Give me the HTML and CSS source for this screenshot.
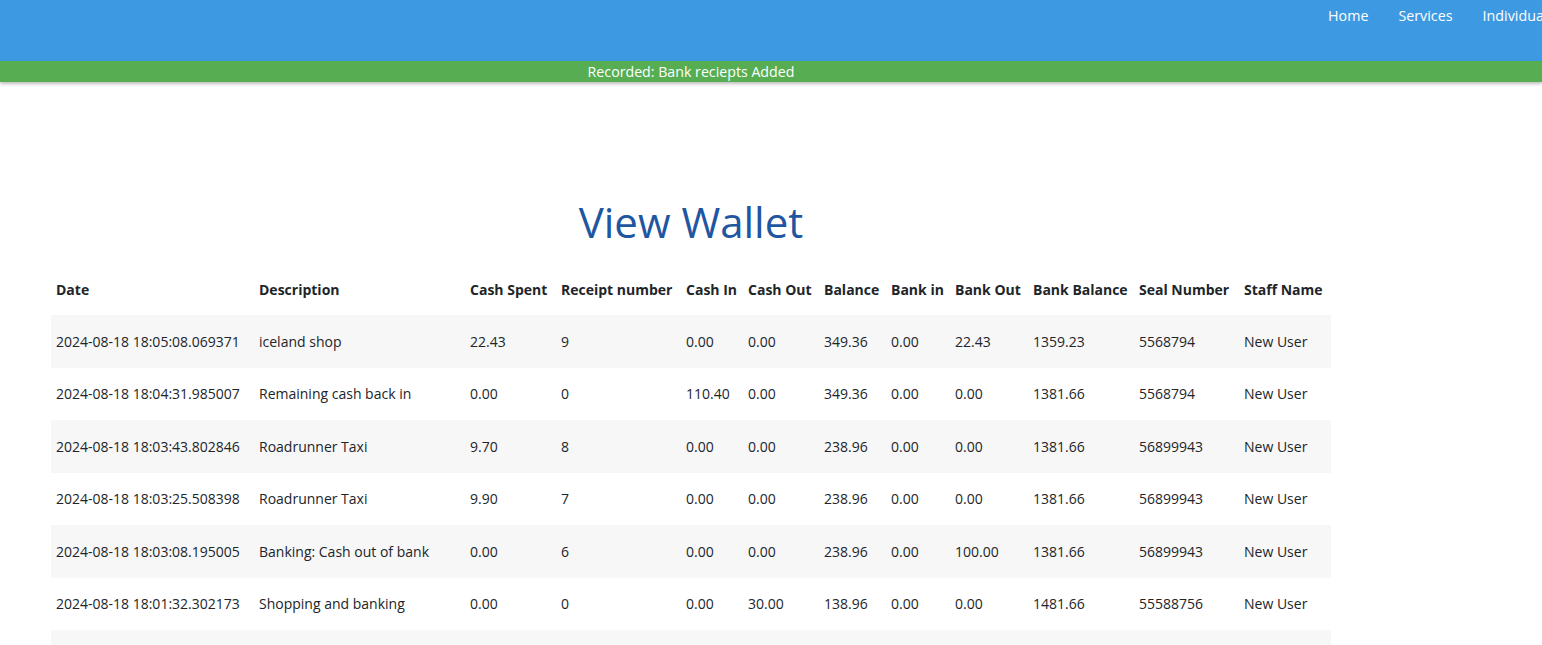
FILE: index.html
```html
<!DOCTYPE html>
<html>
<head>
<meta charset="utf-8">
<title>View Wallet</title>
<link rel="stylesheet" href="styles.css">
</head>
<body>
<header class="topbar">
  <nav class="nav">
    <a class="nav-link" href="#">Home</a>
    <a class="nav-link" href="#">Services</a>
    <a class="nav-link" href="#">Individuals</a>
    <a class="nav-link" href="#">Contact</a>
  </nav>
</header>
<div class="flash">
  <div class="flash-inner">Recorded: Bank reciepts Added</div>
</div>
<main class="content">
  <h1 class="title">View Wallet</h1>
  <table class="wallet">
    <colgroup>
      <col style="width:203px"><col style="width:211px"><col style="width:91px"><col style="width:125px">
      <col style="width:62px"><col style="width:76px"><col style="width:67px"><col style="width:64px">
      <col style="width:78px"><col style="width:106px"><col style="width:105px"><col style="width:92px">
    </colgroup>
    <thead>
      <tr>
        <th>Date</th><th>Description</th><th>Cash Spent</th><th>Receipt number</th><th>Cash In</th><th>Cash Out</th><th>Balance</th><th>Bank in</th><th>Bank Out</th><th>Bank Balance</th><th>Seal Number</th><th>Staff Name</th>
      </tr>
    </thead>
    <tbody>
      <tr><td>2024-08-18 18:05:08.069371</td><td>iceland shop</td><td>22.43</td><td>9</td><td>0.00</td><td>0.00</td><td>349.36</td><td>0.00</td><td>22.43</td><td>1359.23</td><td>5568794</td><td>New User</td></tr>
      <tr><td>2024-08-18 18:04:31.985007</td><td>Remaining cash back in</td><td>0.00</td><td>0</td><td>110.40</td><td>0.00</td><td>349.36</td><td>0.00</td><td>0.00</td><td>1381.66</td><td>5568794</td><td>New User</td></tr>
      <tr><td>2024-08-18 18:03:43.802846</td><td>Roadrunner Taxi</td><td>9.70</td><td>8</td><td>0.00</td><td>0.00</td><td>238.96</td><td>0.00</td><td>0.00</td><td>1381.66</td><td>56899943</td><td>New User</td></tr>
      <tr><td>2024-08-18 18:03:25.508398</td><td>Roadrunner Taxi</td><td>9.90</td><td>7</td><td>0.00</td><td>0.00</td><td>238.96</td><td>0.00</td><td>0.00</td><td>1381.66</td><td>56899943</td><td>New User</td></tr>
      <tr><td>2024-08-18 18:03:08.195005</td><td>Banking: Cash out of bank</td><td>0.00</td><td>6</td><td>0.00</td><td>0.00</td><td>238.96</td><td>0.00</td><td>100.00</td><td>1381.66</td><td>56899943</td><td>New User</td></tr>
      <tr><td>2024-08-18 18:01:32.302173</td><td>Shopping and banking</td><td>0.00</td><td>0</td><td>0.00</td><td>30.00</td><td>138.96</td><td>0.00</td><td>0.00</td><td>1481.66</td><td>55588756</td><td>New User</td></tr>
      <tr><td>2024-08-18 17:58:10.114502</td><td>Opening balance</td><td>0.00</td><td>0</td><td>168.96</td><td>0.00</td><td>168.96</td><td>1481.66</td><td>0.00</td><td>1481.66</td><td>55588756</td><td>New User</td></tr>
    </tbody>
  </table>
</main>
</body>
</html>
```
FILE: styles.css
```css
html, body {
  margin: 0;
  padding: 0;
}
body {
  font-family: "Segoe UI", "Open Sans", "Noto Sans", sans-serif;
  font-size: 14px;
  color: #212529;
  background: #fff;
  overflow: hidden;
}
.topbar {
  background: #3d99e2;
  height: 61px;
  overflow: hidden;
}
.nav {
  display: flex;
  padding-left: 1313px;
  white-space: nowrap;
}
.nav-link {
  color: #fff;
  text-decoration: none;
  padding: 5px 15px;
  line-height: 21px;
  font-size: 14.3px;
  flex: none;
}
.flash {
  background: #56ad52;
  height: 21px;
  box-shadow: 0 2px 3px rgba(0,0,0,0.25);
  position: relative;
}
.flash-inner {
  width: 1382px;
  text-align: center;
  color: #fff;
  font-size: 14.2px;
  line-height: 22px;
}
.content {
  width: 1280px;
  padding: 0 51px;
}
.title {
  margin: 112px 0 13px;
  text-align: center;
  font-weight: 400;
  font-size: 42px;
  line-height: 56px;
  color: #1f56a1;
}
.wallet {
  border-collapse: collapse;
  table-layout: fixed;
  width: 1280px;
}
.wallet th {
  text-align: left;
  font-weight: 700;
  height: 52px;
  padding: 0 5px;
  vertical-align: middle;
  white-space: nowrap;
  overflow: hidden;
}
.wallet td {
  height: 52.5px;
  padding: 0 5px;
  vertical-align: middle;
  white-space: nowrap;
  overflow: hidden;
}
.wallet tbody tr:nth-child(odd) {
  background: #f7f7f7;
}
```
